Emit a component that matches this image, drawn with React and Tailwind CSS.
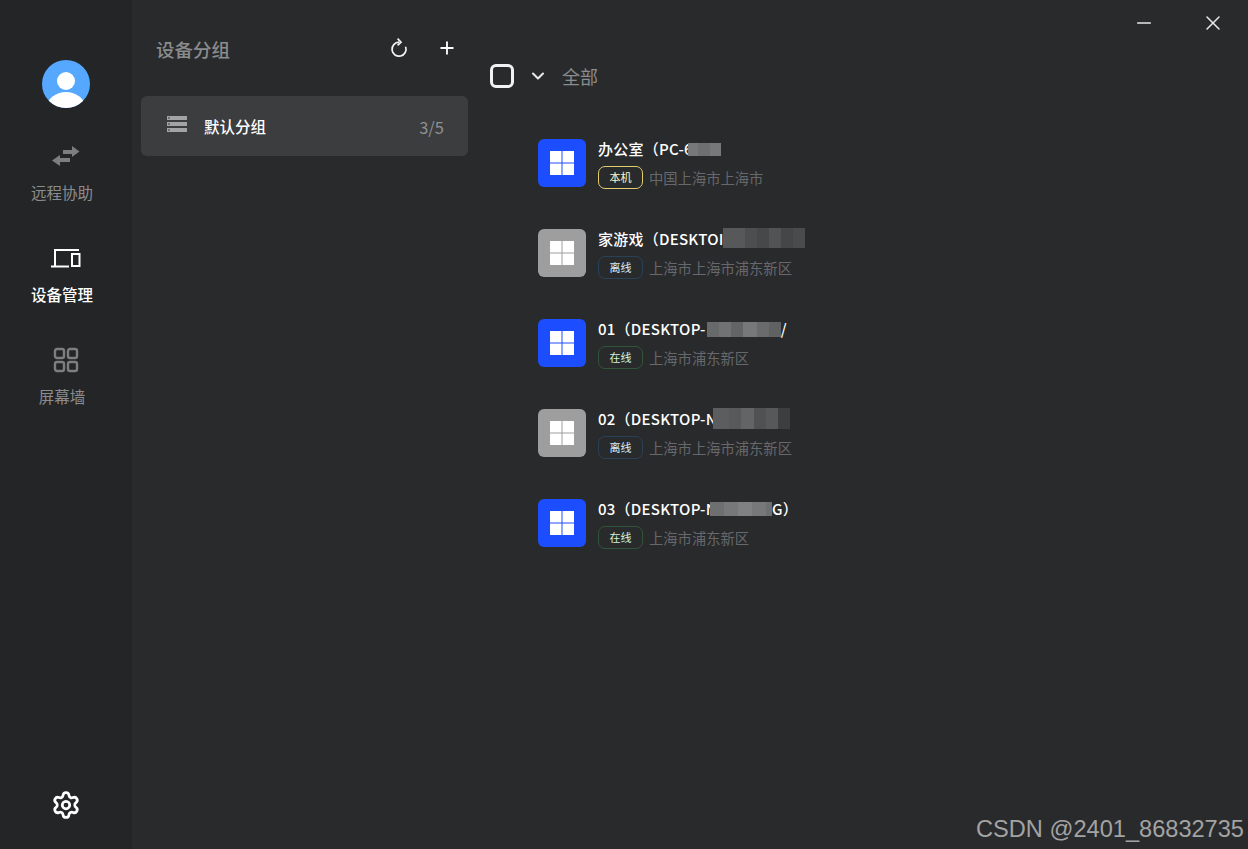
import { Settings, ChevronDown, Plus, Minus, X } from "lucide-react";

const devices = [
  {
    id: 1,
    name: "办公室（PC-6",
    tail: "",
    online: true,
    tag: "本机",
    tagClass: "border-[#e3cc6d] text-[#fff6c8]",
    place: "中国上海市上海市",
    blur: ["bg-[#77787a] w-[10px]", "bg-[#6e6f71] w-[12px]", "bg-[#77787a] w-[11px]"],
    blurBox: "w-[33px] h-[13px] -ml-[5px]",
  },
  {
    id: 2,
    name: "家游戏（DESKTOI",
    tail: "",
    online: false,
    tag: "离线",
    tagClass: "border-[#2a4258] text-[#dcebf5]",
    place: "上海市上海市浦东新区",
    blur: ["bg-[#57585a] w-[22px]", "bg-[#4d4e50] w-[12px]", "bg-[#47484a] w-[12px]", "bg-[#525355] w-[12px]", "bg-[#454648] w-[12px]", "bg-[#4a4b4d] w-[12px]"],
    blurBox: "w-[82px] h-[20px] -mt-[2px] -ml-[1px]",
  },
  {
    id: 3,
    name: "01（DESKTOP-",
    tail: "/",
    online: true,
    tag: "在线",
    tagClass: "border-[#31553a] text-[#d3f3d9]",
    place: "上海市浦东新区",
    blur: ["bg-[#68696b] w-[12px]", "bg-[#717274] w-[12px]", "bg-[#636466] w-[12px]", "bg-[#77787a] w-[14px]", "bg-[#6a6b6d] w-[12px]", "bg-[#606163] w-[12px]"],
    blurBox: "w-[74px] h-[15px] ml-[1px]",
  },
  {
    id: 4,
    name: "02（DESKTOP-N",
    tail: "",
    online: false,
    tag: "离线",
    tagClass: "border-[#2a4258] text-[#dcebf5]",
    place: "上海市上海市浦东新区",
    blur: ["bg-[#5c5d5f] w-[16px]", "bg-[#58595b] w-[12px]", "bg-[#636466] w-[13px]", "bg-[#505153] w-[12px]", "bg-[#57585a] w-[12px]", "bg-[#3d3e40] w-[12px]"],
    blurBox: "w-[77px] h-[21px] -mt-[2px] -ml-[4px]",
  },
  {
    id: 5,
    name: "03（DESKTOP-N",
    tail: "G）",
    online: true,
    tag: "在线",
    tagClass: "border-[#31553a] text-[#d3f3d9]",
    place: "上海市浦东新区",
    blur: ["bg-[#6e6f71] w-[14px]", "bg-[#77787a] w-[14px]", "bg-[#808183] w-[14px]", "bg-[#77787a] w-[14px]", "bg-[#6e6f71] w-[6px]"],
    blurBox: "w-[62px] h-[14px] -ml-[7px]",
  },
];

function Avatar() {
  return (
    <svg width="48" height="48" viewBox="0 0 48 48">
      <defs>
        <clipPath id="avatar-clip">
          <circle cx="24" cy="24" r="24" />
        </clipPath>
      </defs>
      <circle cx="24" cy="24" r="24" fill="#56a8ff" />
      <circle cx="24" cy="21" r="9" fill="#fff" />
      <ellipse cx="24" cy="47" rx="19" ry="15" fill="#fff" clipPath="url(#avatar-clip)" />
    </svg>
  );
}

function SwapIcon() {
  return (
    <svg width="28" height="20" viewBox="0 0 28 20" fill="#7d7e80">
      <path d="M11 4h9V0l7.5 5.5L20 11V8H11z" />
      <path d="M18 12H8V9l-8 5.5L8 20v-4h10z" />
    </svg>
  );
}

function DevicesIcon() {
  return (
    <svg width="30" height="20" viewBox="0 0 30 20" fill="none" stroke="#fff" strokeWidth="2">
      <path d="M4 18V2h24" />
      <path d="M0 18.5h18" />
      <rect x="21" y="6" width="7.5" height="12" />
    </svg>
  );
}

function GridIcon() {
  return (
    <svg width="26" height="26" viewBox="0 0 26 26" fill="none" stroke="#7d7e80" strokeWidth="2.4">
      <rect x="2" y="2" width="9" height="9" rx="2" />
      <rect x="15" y="2" width="9" height="9" rx="2" />
      <rect x="2" y="15" width="9" height="9" rx="2" />
      <rect x="15" y="15" width="9" height="9" rx="2" />
    </svg>
  );
}

function RefreshIcon() {
  return (
    <svg width="18" height="20" viewBox="0 0 18 20" fill="none" stroke="#f2f2f2" strokeWidth="1.7">
      <path d="M9 4.2a7 7 0 1 0 6.6 4.6" />
      <path d="M7.6 0.6L11 4.2 7.6 7.4" />
    </svg>
  );
}

function ListIcon() {
  return (
    <svg width="20" height="18" viewBox="0 0 20 18" fill="#a3a4a5">
      <rect y="1" width="20" height="4" />
      <rect y="7" width="20" height="4" />
      <rect y="13" width="20" height="4" />
      <rect x="1" y="2.5" width="2" height="1" fill="#3c3d3f" />
      <rect x="1" y="8.5" width="2" height="1" fill="#3c3d3f" />
      <rect x="1" y="14.5" width="2" height="1" fill="#3c3d3f" />
    </svg>
  );
}

function WinIcon({ online }) {
  return (
    <div className={`flex h-12 w-12 shrink-0 items-center justify-center rounded-md ${online ? "bg-[#1c4dff]" : "bg-[#9e9e9e]"}`}>
      <svg width="24" height="24" viewBox="0 0 24 24" fill="#fff">
        <rect width="11.5" height="11.5" />
        <rect x="12.5" width="11.5" height="11.5" />
        <rect y="12.5" width="11.5" height="11.5" />
        <rect x="12.5" y="12.5" width="11.5" height="11.5" />
      </svg>
    </div>
  );
}

function NavItem({ icon, label, active }) {
  return (
    <div className="flex h-[102px] flex-col items-center">
      <div className="ml-2 flex h-[32px] items-center">{icon}</div>
      <span className={`mt-[8px] text-[15.5px] leading-[24px] ${active ? "font-medium text-white" : "text-[#8b8c8e]"}`}>
        {label}
      </span>
    </div>
  );
}

function DeviceRow({ d }) {
  return (
    <div className="flex h-[90px] gap-3">
      <WinIcon online={d.online} />
      <div className="min-w-0">
        <div className="-mt-px flex h-[22px] items-center text-[15px] font-medium leading-[22px] tracking-[0.25px] text-white">
          <span className="shrink-0">{d.name}</span>
          <span className={`flex shrink-0 ${d.blurBox}`}>
            {d.blur.map((c, i) => (
              <span key={i} className={`h-full ${c}`} />
            ))}
          </span>
          <span className="shrink-0">{d.tail}</span>
        </div>
        <div className="mt-[6px] flex items-center gap-[6px]">
          <span className={`flex h-[23px] w-[45px] items-center justify-center rounded-[7px] border-[1.5px] text-[11px] ${d.tagClass}`}>
            {d.tag}
          </span>
          <span className="text-[14.3px] text-[#66686b]">{d.place}</span>
        </div>
      </div>
    </div>
  );
}

export default function App() {
  return (
    <div
      className="relative flex h-[849px] w-full overflow-hidden bg-[#292a2c]"
      style={{ fontFamily: '"Noto Sans CJK SC", "Noto Sans", sans-serif' }}
    >
      {/* sidebar */}
      <aside className="flex w-[132px] shrink-0 flex-col bg-[#242527] pt-[60px]">
        <div className="ml-[42px]">
          <Avatar />
        </div>
        <nav className="mt-[32px] flex w-[124px] flex-col">
          <NavItem icon={<SwapIcon />} label="远程协助" />
          <NavItem icon={<DevicesIcon />} label="设备管理" active />
          <NavItem icon={<GridIcon />} label="屏幕墙" />
        </nav>
        <div className="mt-auto mb-[29px] ml-[51px]">
          <Settings size={30} color="#fff" strokeWidth={2.2} />
        </div>
      </aside>

      {/* groups */}
      <section className="w-[348px] shrink-0 px-[9px]">
        <div className="flex h-[96px] items-start pt-[33px]">
          <span className="ml-[15px] text-[18.5px] font-medium leading-[32px] text-[#8b8c8e]">设备分组</span>
          <div className="ml-auto flex items-center gap-[29px] pr-[14px] pt-[5px]">
            <RefreshIcon />
            <Plus size={20} color="#fff" strokeWidth={2.2} />
          </div>
        </div>
        <div className="flex h-[60px] w-[327px] items-center rounded-md bg-[#3c3d3f] pl-[26px] pr-[24px]">
          <div className="-mt-[4px]">
            <ListIcon />
          </div>
          <span className="ml-[17px] mt-[2px] text-[15.5px] font-medium text-white">默认分组</span>
          <span className="ml-auto mt-[2px] text-[16.5px] text-[#8f9092]">3/5</span>
        </div>
      </section>

      {/* devices */}
      <main className="flex min-w-0 flex-1 flex-col">
        <div className="flex h-[46px] items-center justify-end gap-[46px] pr-[23px]">
          <Minus size={22} color="#e8e8e8" strokeWidth={1.4} />
          <X size={24} color="#e8e8e8" strokeWidth={1.5} />
        </div>
        <div className="ml-[10px] mt-[18px] flex h-6 items-center">
          <div className="h-6 w-6 rounded-md border-[3px] border-[#f2f2f2]" />
          <ChevronDown className="ml-[14px]" size={20} color="#e8e8e8" strokeWidth={2.5} />
          <span className="ml-[14px] text-[18px] text-[#8b8c8e]">全部</span>
        </div>
        <div className="ml-[58px] mt-[51px] flex flex-col">
          {devices.map((d) => (
            <DeviceRow key={d.id} d={d} />
          ))}
        </div>
      </main>

      {/* csdn watermark */}
      <span
        className="absolute bottom-[4px] right-[4px] text-[23.6px] leading-[32px] text-[#a3a3a3]"
        style={{ fontFamily: '"Liberation Sans", sans-serif' }}
      >
        CSDN @2401_86832735
      </span>
    </div>
  );
}
